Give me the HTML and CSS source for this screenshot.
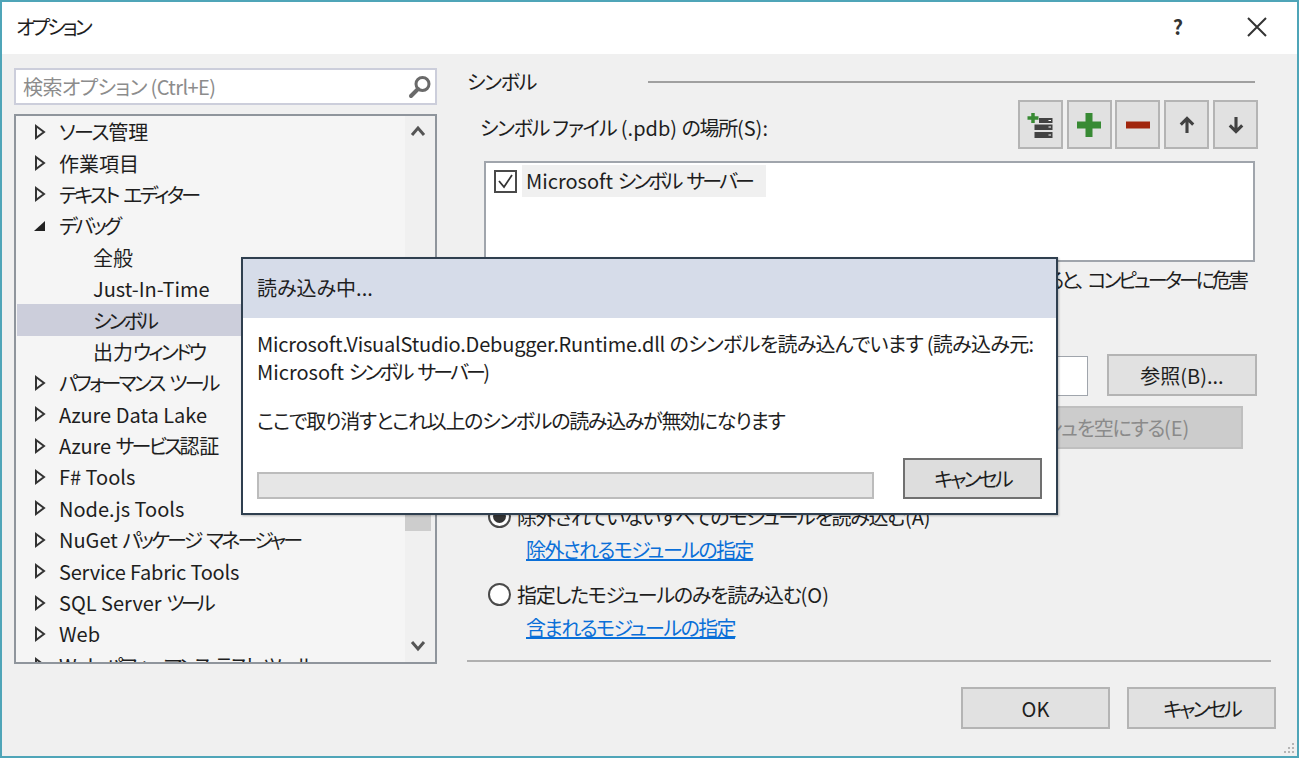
FILE: index.html
```html
<!DOCTYPE html>
<html lang="ja">
<head>
    <meta charset="UTF-8">
    <title>オプション</title>
    <link rel="stylesheet" href="styles.css">
</head>
<body>
    <div class="window">
        <div class="titlebar">
            <span class="title">オプション</span>
            <span class="help">?</span>
            <svg class="close" width="20" height="20" viewBox="0 0 20 20"><path d="M1 1L19 19M19 1L1 19" stroke="#333" stroke-width="2" fill="none"/></svg>
        </div>
        <div class="main">
            <div class="left">
                <div class="search">
                    <input type="text" placeholder="検索オプション (Ctrl+E)">
                    <svg width="26" height="26" viewBox="0 0 26 26"><circle cx="15.5" cy="10" r="6.5" fill="none" stroke="#6a6a6a" stroke-width="3"/><path d="M11 15L4 22" stroke="#6a6a6a" stroke-width="4" stroke-linecap="round"/></svg>
                </div>
                <div class="tree">
                    <ul class="tree-list">
                        <li class="row"><svg class="arrow" width="12" height="16" viewBox="0 0 12 16"><path d="M2 2L10 8L2 14Z" fill="none" stroke="#333" stroke-width="2"/></svg><span><span class="mixed">ソース</span>管理</span></li>
                        <li class="row"><svg class="arrow" width="12" height="16" viewBox="0 0 12 16"><path d="M2 2L10 8L2 14Z" fill="none" stroke="#333" stroke-width="2"/></svg>作業項目</li>
                        <li class="row"><svg class="arrow" width="12" height="16" viewBox="0 0 12 16"><path d="M2 2L10 8L2 14Z" fill="none" stroke="#333" stroke-width="2"/></svg><span class="kana">テキスト エディター</span></li>
                        <li class="row"><svg class="arrow" width="12" height="16" viewBox="0 0 12 16"><path d="M0 13L11 13L11 3Z" fill="#222"/></svg><span class="kana">デバッグ</span></li>
                        <li class="row child">全般</li>
                        <li class="row child">Just-In-Time</li>
                        <li class="row child selected"><span class="kana">シンボル</span></li>
                        <li class="row child"><span>出力<span class="kana">ウィンドウ</span></span></li>
                        <li class="row"><svg class="arrow" width="12" height="16" viewBox="0 0 12 16"><path d="M2 2L10 8L2 14Z" fill="none" stroke="#333" stroke-width="2"/></svg><span class="kana">パフォーマンス ツール</span></li>
                        <li class="row"><svg class="arrow" width="12" height="16" viewBox="0 0 12 16"><path d="M2 2L10 8L2 14Z" fill="none" stroke="#333" stroke-width="2"/></svg>Azure Data Lake</li>
                        <li class="row"><svg class="arrow" width="12" height="16" viewBox="0 0 12 16"><path d="M2 2L10 8L2 14Z" fill="none" stroke="#333" stroke-width="2"/></svg><span>Azure <span class="kana">サービス</span>認証</span></li>
                        <li class="row"><svg class="arrow" width="12" height="16" viewBox="0 0 12 16"><path d="M2 2L10 8L2 14Z" fill="none" stroke="#333" stroke-width="2"/></svg>F# Tools</li>
                        <li class="row"><svg class="arrow" width="12" height="16" viewBox="0 0 12 16"><path d="M2 2L10 8L2 14Z" fill="none" stroke="#333" stroke-width="2"/></svg>Node.js Tools</li>
                        <li class="row"><svg class="arrow" width="12" height="16" viewBox="0 0 12 16"><path d="M2 2L10 8L2 14Z" fill="none" stroke="#333" stroke-width="2"/></svg><span>NuGet <span class="kana">パッケージ マネージャー</span></span></li>
                        <li class="row"><svg class="arrow" width="12" height="16" viewBox="0 0 12 16"><path d="M2 2L10 8L2 14Z" fill="none" stroke="#333" stroke-width="2"/></svg><span class="latin">Service Fabric Tools</span></li>
                        <li class="row"><svg class="arrow" width="12" height="16" viewBox="0 0 12 16"><path d="M2 2L10 8L2 14Z" fill="none" stroke="#333" stroke-width="2"/></svg><span>SQL Server <span class="kana-tight">ツール</span></span></li>
                        <li class="row"><svg class="arrow" width="12" height="16" viewBox="0 0 12 16"><path d="M2 2L10 8L2 14Z" fill="none" stroke="#333" stroke-width="2"/></svg>Web</li>
                        <li class="row"><svg class="arrow" width="12" height="16" viewBox="0 0 12 16"><path d="M2 2L10 8L2 14Z" fill="none" stroke="#333" stroke-width="2"/></svg><span>Web <span class="kana">パフォーマンス テスト ツール</span></span></li>
                    </ul>
                    <div class="scrollbar">
                        <svg class="scroll-btn" width="16" height="12" viewBox="0 0 16 12"><path d="M2 10L8 3L14 10" fill="none" stroke="#555" stroke-width="3"/></svg>
                        <div class="track"><div class="thumb"></div></div>
                        <svg class="scroll-btn" width="16" height="12" viewBox="0 0 16 12"><path d="M2 2L8 9L14 2" fill="none" stroke="#555" stroke-width="3"/></svg>
                    </div>
                </div>
            </div>
            <div class="right">
                <div class="heading">
                    <span class="mixed">シンボル</span>
                    <div class="heading-line"></div>
                </div>
                <div class="location-row">
                    <span class="location-label"><span class="mixed">シンボル ファイル</span> (.pdb) <span class="mixed">の場所</span>(S):</span>
                    <div class="tools">
                        <button class="tool"><svg width="28" height="28" viewBox="0 0 28 28"><path d="M1.500 7H12.500M7 2V12" stroke="#388a34" stroke-width="3.500"/><path d="M13 7H26.500V12H13ZM8.500 13.500H26.500V19H8.500ZM8.500 21H26.500V27H8.500Z" fill="#424242"/><path d="M22.500 9.500H25M22.500 16H25M22.500 24H25" stroke="#fff" stroke-width="1"/></svg></button>
                        <button class="tool"><svg width="26" height="26" viewBox="0 0 26 26"><path d="M1 13H25M13 1V25" stroke="#388a34" stroke-width="7"/></svg></button>
                        <button class="tool"><svg width="26" height="26" viewBox="0 0 26 26"><path d="M1 13H25" stroke="#a1260d" stroke-width="7"/></svg></button>
                        <button class="tool"><svg width="16" height="18" viewBox="0 0 18 20"><path d="M9 19V3M2 9.500L9 2.500L16 9.500" fill="none" stroke="#424242" stroke-width="3.500"/></svg></button>
                        <button class="tool"><svg width="16" height="18" viewBox="0 0 18 20"><path d="M9 1V17M2 10.500L9 17.500L16 10.500" fill="none" stroke="#424242" stroke-width="3.500"/></svg></button>
                    </div>
                </div>
                <div class="server-list">
                    <div class="server">
                        <span class="checkbox"><svg width="19" height="19" viewBox="0 0 19 19"><path d="M3 9L8 15L16 3" fill="none" stroke="#333" stroke-width="1.800"/></svg></span>
                        <span class="server-name">Microsoft <span class="kana">シンボル サーバー</span></span>
                    </div>
                </div>
                <p class="warning"><span class="kana-warn">シンボル サーバーを使用すると、 コンピューターに危害</span></p>
                <div class="cache-row">
                    <div class="cache-input"></div>
                    <button class="btn browse">参照(B)...</button>
                </div>
                <div class="clear-row">
                    <button class="btn clear" disabled><span class="mixed">シンボル キャッシュを空にする</span>(E)</button>
                </div>
                <label class="radio-row first"><span class="radio on"></span><span class="mixed">除外されていないすべてのモジュールを読み込む</span>(A)</label>
                <a class="link" href="#">除外されるモジュールの指定</a>
                <label class="radio-row second"><span class="radio"></span><span class="mixed">指定したモジュールのみを読み込む</span>(O)</label>
                <a class="link" href="#">含まれるモジュールの指定</a>
                <div class="separator"></div>
            </div>
        </div>
        <div class="footer">
            <button class="btn">OK</button>
            <button class="btn"><span class="kana">キャンセル</span></button>
        </div>
        <svg class="grip" width="14" height="14" viewBox="0 0 14 14"><path d="M10 2h2v2h-2zM6 6h2v2H6zM10 6h2v2h-2zM2 10h2v2H2zM6 10h2v2H6zM10 10h2v2h-2z" fill="#b5b5b5"/></svg>

        <div class="loading">
            <div class="loading-head">読み込み中...</div>
            <div class="loading-body">
                <p><span class="latin">Microsoft.VisualStudio.Debugger.Runtime.dll</span> <span class="soft">のシンボルを読み込んでいます (読み込み元:</span><br>Microsoft <span class="kana">シンボル サーバー</span>)</p>
                <p class="loading-note mixed">ここで取り消すとこれ以上のシンボルの読み込みが無効になります</p>
                <div class="loading-foot">
                    <div class="progress"></div>
                    <button class="btn cancel"><span class="kana">キャンセル</span></button>
                </div>
            </div>
        </div>
    </div>
</body>
</html>
```

FILE: styles.css
```css
*{
    box-sizing: border-box;
}
body{
    margin: 0;
    font-family: "Noto Sans CJK JP", "Noto Sans", sans-serif;
    font-size: 20px;
    font-feature-settings: "palt";
    color: #1e1e1e;
}
button, input{
    font: inherit;
    font-feature-settings: inherit;
}

/* the original font has narrower kana, so runs of it get tightened */
.kana{
    letter-spacing: -2.8px;
    word-spacing: 4px;
}
.kana-tight{
    letter-spacing: -3.6px;
}
.kana-warn{
    letter-spacing: -3px;
    word-spacing: 4px;
}
.mixed{
    letter-spacing: -1.3px;
}
.soft{
    letter-spacing: -0.7px;
}
.latin{
    letter-spacing: -0.2px;
}

.window{
    position: relative;
    width: 1299px;
    height: 758px;
    border: 2px solid #4fa5b8;
    background-color: #f0f0f0;
    overflow: hidden;
}
.titlebar{
    display: flex;
    align-items: center;
    height: 52px;
    padding: 0 30px 0 14px;
    background-color: #fff;
}
.title{
    flex: 1;
    padding-bottom: 3px;
    letter-spacing: -2.8px;
}
.help{
    margin-right: 64px;
    padding-bottom: 3px;
    font-weight: 700;
    color: #333;
}
.close{
    margin-bottom: 2px;
}

/* main two columns */
.main{
    display: flex;
    gap: 30px;
    padding-left: 12px;
}
.left{
    width: 423px;
    padding-top: 14px;
}
.search{
    display: flex;
    align-items: center;
    height: 37px;
    padding: 0 2px 0 7px;
    background-color: #fff;
    border: 2px solid #ccceDB;
}
.search input{
    flex: 1;
    min-width: 0;
    border: none;
    outline: none;
    padding: 0;
    letter-spacing: -0.6px;
    background: transparent;
}
.search input::placeholder{
    color: #8c8c8c;
}
.tree{
    display: flex;
    height: 550px;
    margin-top: 9px;
    background-color: #f5f5f5;
    border: 2px solid #8f959c;
    overflow: hidden;
}
.tree-list{
    flex: 1;
    min-width: 0;
    margin: 0;
    padding: 0 0 0 1px;
    list-style: none;
}
.row{
    display: flex;
    align-items: center;
    height: 31.4px;
    padding-left: 17px;
    white-space: nowrap;
}
.arrow{
    margin-right: 13px;
}
.child{
    padding-left: 76px;
}
.selected{
    background-color: #ccceDB;
}
.scrollbar{
    display: flex;
    flex-direction: column;
    align-items: center;
    width: 30px;
    padding: 9px 4px 10px 0;
    background-color: #f0f0f0;
}
.scroll-btn{
    flex: none;
}
.track{
    flex: 1;
    width: 100%;
}
.thumb{
    height: 227px;
    margin-top: 167px;
    background-color: #cdcdcd;
}

/* symbols pane */
.right{
    width: 804px;
}
.heading{
    display: flex;
    align-items: center;
    height: 40px;
    padding-top: 15px;
    padding-right: 16px;
}
.heading-line{
    flex: 1;
    height: 2px;
    margin-left: 112px;
    background-color: #a0a0a0;
}
.location-row{
    display: flex;
    justify-content: space-between;
    height: 61px;
    margin-top: 6px;
    padding: 0 13px 0 13px;
}
.location-label{
    padding-top: 13px;
}
.tools{
    display: flex;
    gap: 3.8px;
}
.tool{
    display: flex;
    align-items: center;
    justify-content: center;
    width: 45px;
    height: 49px;
    padding: 0;
    background-color: #e1e1e1;
    border: 2px solid #b4b4b4;
}
.server-list{
    width: 771px;
    height: 101px;
    margin-left: 17px;
    padding: 2px 0 0 8px;
    background-color: #fff;
    border: 2px solid #a0a5ac;
}
.server{
    display: flex;
    align-items: center;
    height: 32px;
}
.checkbox{
    display: flex;
    align-items: center;
    justify-content: center;
    width: 23px;
    height: 23px;
    margin-right: 5px;
    border: 2px solid #4a4a4a;
    background-color: #fff;
}
.server-name{
    width: 244px;
    height: 32px;
    line-height: 32px;
    padding-left: 4px;
    white-space: nowrap;
    background-color: #f0f0f0;
}
.warning{
    display: flex;
    justify-content: flex-end;
    width: 779px;
    margin: 4px 0 0;
    height: 28px;
    line-height: 28px;
    white-space: nowrap;
}
.cache-row{
    display: flex;
    gap: 19px;
    margin-top: 60px;
    margin-left: 17px;
}
.cache-input{
    width: 604px;
    height: 40px;
    margin-top: 2px;
    background-color: #fff;
    border: 1px solid #a0a5ac;
}
.btn{
    width: 149px;
    height: 42px;
    padding: 0;
    background-color: #e1e1e1;
    border: 2px solid #b4b4b4;
    color: #1e1e1e;
}
.browse{
    width: 150px;
}
.clear-row{
    display: flex;
    justify-content: flex-end;
    width: 776px;
    margin-top: 10px;
}
.clear{
    width: 372px;
    height: 43px;
    flex: none;
    background-color: #cccccc;
    border-color: #bfbfbf;
    color: #8a8a8a;
}
.radio-row{
    display: flex;
    align-items: center;
    height: 32px;
    padding-left: 21px;
    white-space: nowrap;
}
.first{
    margin-top: 51px;
}
.second{
    margin-top: 13px;
}
.radio{
    position: relative;
    width: 23px;
    height: 23px;
    margin-right: 6px;
    border: 2px solid #4a4a4a;
    border-radius: 50%;
    background-color: #fff;
}
.radio.on::after{
    content: "";
    position: absolute;
    top: 3px;
    left: 3px;
    width: 13px;
    height: 13px;
    border-radius: 50%;
    background-color: #333;
}
.link{
    display: block;
    width: fit-content;
    margin-left: 59px;
    margin-top: 3px;
    height: 30px;
    line-height: 30px;
    letter-spacing: -1.6px;
    color: #0a6fd8;
}
.separator{
    height: 2px;
    margin-top: 17px;
    background-color: #b0b0b0;
}
.footer{
    display: flex;
    justify-content: flex-end;
    gap: 17px;
    margin-top: 23px;
    padding-right: 21px;
}
.grip{
    position: absolute;
    right: 1px;
    bottom: 1px;
}

/* loading popup, sits over the options page */
.loading{
    position: absolute;
    top: 255px;
    left: 239px;
    width: 817px;
    height: 258px;
    background-color: #fff;
    border: 2px solid #2f3f4f;
    box-shadow: 1px 1px 2px rgba(0,0,0,0.25);
}
.loading-head{
    height: 59px;
    padding: 15px 14px 0;
    line-height: 28px;
    background-color: #d6dce9;
}
.loading-body{
    padding: 12px 14px 0;
}
.loading-body p{
    margin: 0;
    line-height: 28px;
    white-space: nowrap;
}
.loading-body .loading-note{
    margin-top: 21px;
}
.loading-foot{
    display: flex;
    align-items: flex-end;
    justify-content: space-between;
    margin-top: 23px;
}
.progress{
    width: 617px;
    height: 27px;
    background-color: #e6e6e6;
    border: 2px solid #bcbcbc;
}
.cancel{
    width: 139px;
    height: 41px;
    background-color: #dddddd;
    border-color: #707070;
}
```
